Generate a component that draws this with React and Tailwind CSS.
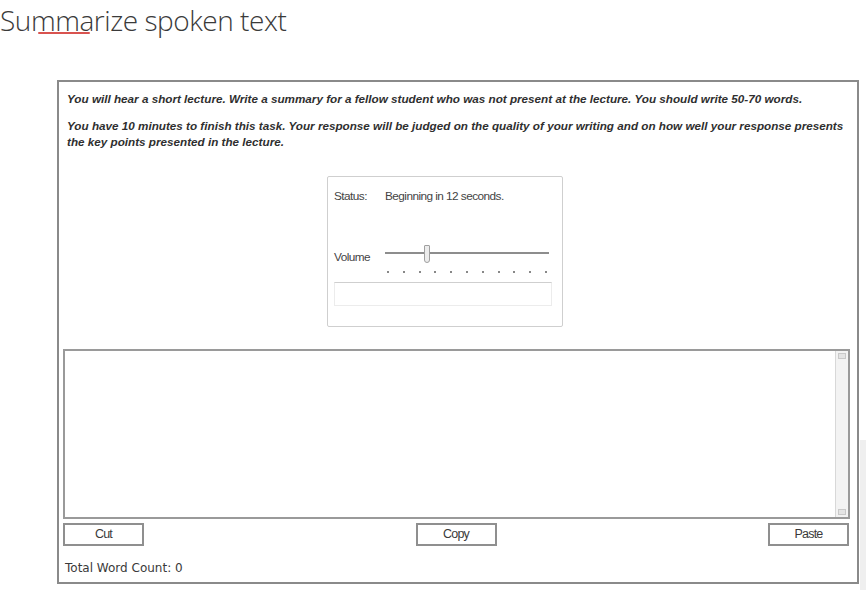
export default function App() {
  const ticks = Array.from({ length: 11 });

  return (
    <div className="relative h-[590px] w-[866px] overflow-hidden bg-white">
      {/* heading */}
      <div className="h-[80px] pt-[1px]">
        <h1 className="relative inline-block font-['Open_Sans',sans-serif] text-[28px] font-light leading-[38px] tracking-[-0.45px] text-[#3a3a3a]">
          Summarize spoken text
          <span className="absolute left-[38px] top-[31px] h-[2px] w-[52px] rounded bg-[#d9534f]" />
        </h1>
      </div>

      {/* test panel */}
      <div className="ml-[57px] flex h-[504px] w-[802px] flex-col border-2 border-[#8a8a8a] font-['Liberation_Sans',Arial,sans-serif]">
        <div className="pl-[8px] pr-[6px] pt-[9px] text-[11.7px] font-bold italic leading-[16px] text-[#2f2f2f]">
          <p className="whitespace-nowrap">
            You will hear a short lecture. Write a summary for a fellow student who was not present at the lecture. You should write 50-70 words.
          </p>
          <p className="mt-[11px]">
            You have 10 minutes to finish this task. Your response will be judged on the quality of your writing and on how well your response presents the key points presented in the lecture.
          </p>
        </div>

        {/* audio status */}
        <div className="mt-[26px] flex">
          <div className="ml-[268px] h-[151px] w-[236px] rounded-[2px] border border-[#cfcfcf] px-[6px] pt-[11px] text-[11.8px] tracking-[-0.55px] text-[#444]">
            <div className="flex">
              <span className="w-[51px]">Status:</span>
              <span>Beginning in 12 seconds.</span>
            </div>
            <div className="mt-[39px] flex items-start">
              <span className="mt-[4px] w-[51px]">Volume</span>
              <div className="relative w-[164px]">
                <div className="mt-[7px] h-[2px] w-full bg-[#8d8d8d]" />
                <div className="absolute left-[39px] top-[0px] h-[18px] w-[6px] rounded-b-[3px] rounded-t-[1px] border border-[#a0a0a0] bg-[#ececec]" />
                <div className="mt-[17px] flex justify-between px-[2px]">
                  {ticks.map((_, i) => (
                    <span key={i} className="h-[2px] w-[2px] bg-[#888]" />
                  ))}
                </div>
              </div>
            </div>
            <div className="mt-[9px] h-[24px] w-[218px] border border-[#ececec] border-t-[#cfcfcf]" />
          </div>
        </div>

        {/* response area */}
        <div className="ml-[4px] mr-[7px] mt-[22px] flex h-[170px] border-2 border-[#9a9a9a]">
          <div className="flex-1 bg-white" />
          <div className="flex w-[13px] flex-col justify-between border-l border-[#d8d8d8] bg-[#f3f3f3] py-[2px]">
            <span className="mx-auto h-[6px] w-[8px] border border-[#c9c9c9] bg-[#e4e4e4]" />
            <span className="mx-auto h-[6px] w-[8px] border border-[#c9c9c9] bg-[#e4e4e4]" />
          </div>
        </div>

        <div className="ml-[4px] mr-[8px] mt-[4px] flex justify-between text-[12.5px] tracking-[-0.8px] text-[#3a3a3a]">
          <button className="h-[23px] w-[81px] border-2 border-[#8f8f8f] bg-white">Cut</button>
          <button className="h-[23px] w-[81px] border-2 border-[#8f8f8f] bg-white">Copy</button>
          <button className="h-[23px] w-[81px] border-2 border-[#8f8f8f] bg-white">Paste</button>
        </div>

        <div className="ml-[6px] mt-[13px] font-['DejaVu_Sans',sans-serif] text-[12px] text-[#3a3a3a]">
          Total Word Count: 0
        </div>
      </div>

      <div className="absolute right-0 top-[440px] h-[150px] w-[6px] bg-[#efefef]" />
    </div>
  );
}
